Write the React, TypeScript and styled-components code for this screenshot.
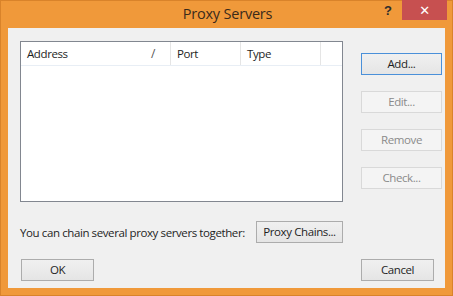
import * as React from "react";
import styled, { createGlobalStyle } from "styled-components";

const GlobalStyle = createGlobalStyle`
  html, body {
    margin: 0;
    padding: 0;
    background: #f0993a;
  }
  body {
    font-family: "Open Sans", "Noto Sans", sans-serif;
    font-size: 11.5px;
    letter-spacing: -0.4px;
  }
`;

const WindowStyled = styled.div`
  width: 453px;
  height: 296px;
  box-sizing: border-box;
  background: #f0993a;
  border: 1px solid #d9832a;
  display: flex;
  flex-direction: column;
`;

const TitleBar = styled.div`
  height: 27px;
  display: flex;
  align-items: flex-start;
  position: relative;
  .title {
    flex: 1;
    text-align: center;
    font-size: 14.5px;
    letter-spacing: -0.2px;
    color: #3a2a1a;
    line-height: 26px;
    padding-left: 2px;
  }
  .help {
    position: absolute;
    right: 60px;
    top: 2px;
    font-weight: bold;
    font-size: 13px;
    letter-spacing: 0;
    color: #2d2d2d;
    font-family: "Liberation Sans", sans-serif;
  }
  .close {
    position: absolute;
    right: 5px;
    top: -1px;
    width: 45px;
    height: 20px;
    background: #c75050;
    color: #fff;
    display: flex;
    align-items: center;
    justify-content: center;
    font-size: 13px;
    font-family: "DejaVu Sans", sans-serif;
  }
`;

const Client = styled.div`
  margin-left: 7px;
  width: 437px;
  height: 260px;
  background: #f0f0f0;
  box-sizing: border-box;
  padding: 13px 0 0 12px;
  color: #1e1e1e;
  white-space: nowrap;
`;

const TopRow = styled.div`
  display: flex;
  align-items: flex-start;
`;

const ListBox = styled.div`
  width: 323px;
  height: 161px;
  box-sizing: border-box;
  border: 1px solid #828790;
  background: #fff;
`;

const Header = styled.div`
  display: flex;
  height: 24px;
  border-bottom: 1px solid #e8eef5;
  box-sizing: border-box;
`;

const Column = styled.div<{ $width: number }>`
  width: ${(p) => p.$width}px;
  box-sizing: border-box;
  border-right: 1px solid #e5e5e5;
  padding: 0 6px;
  display: flex;
  align-items: center;
  justify-content: space-between;
  line-height: 22px;
  .sort {
    color: #555;
    font-size: 12px;
    margin-right: 9px;
  }
`;

const ButtonColumn = styled.div`
  margin-left: 18px;
  padding-top: 12px;
  display: flex;
  flex-direction: column;
  gap: 16px;
`;

const Button = styled.button<{ $width: number; $variant?: "default" | "disabled" }>`
  width: ${(p) => p.$width}px;
  height: 22px;
  box-sizing: border-box;
  font-family: "Open Sans", "Noto Sans", sans-serif;
  font-size: 11.5px;
  letter-spacing: -0.4px;
  white-space: nowrap;
  padding: 0;
  line-height: 18px;
  border: 1px solid
    ${(p) =>
      p.$variant === "default"
        ? "#4a90d9"
        : p.$variant === "disabled"
          ? "#d9d9d9"
          : "#acacac"};
  background: ${(p) =>
    p.$variant === "disabled"
      ? "#f4f4f4"
      : "linear-gradient(#f0f0f0, #e5e5e5)"};
  color: ${(p) => (p.$variant === "disabled" ? "#8a8a8a" : "#1e1e1e")};
`;

const ChainRow = styled.div`
  width: 323px;
  margin-top: 19px;
  display: flex;
  align-items: center;
  justify-content: space-between;
`;

const FooterRow = styled.div`
  width: 413px;
  margin-top: 16px;
  padding-left: 1px;
  display: flex;
  justify-content: space-between;
`;

const App: React.FC = () => {
  return (
    <>
      <GlobalStyle />
      <WindowStyled>
        <TitleBar>
          <div className="title">Proxy Servers</div>
          <div className="help">?</div>
          <div className="close">✕</div>
        </TitleBar>
        <Client>
          <TopRow>
            <ListBox>
              <Header>
                <Column $width={150}>
                  <span>Address</span>
                  <span className="sort">/</span>
                </Column>
                <Column $width={70}>Port</Column>
                <Column $width={80}>Type</Column>
              </Header>
            </ListBox>
            <ButtonColumn>
              <Button $width={81} $variant="default">
                Add...
              </Button>
              <Button $width={81} $variant="disabled">
                Edit...
              </Button>
              <Button $width={81} $variant="disabled">
                Remove
              </Button>
              <Button $width={81} $variant="disabled">
                Check...
              </Button>
            </ButtonColumn>
          </TopRow>
          <ChainRow>
            <span>You can chain several proxy servers together:</span>
            <Button $width={87}>Proxy Chains...</Button>
          </ChainRow>
          <FooterRow>
            <Button $width={73}>OK</Button>
            <Button $width={73}>Cancel</Button>
          </FooterRow>
        </Client>
      </WindowStyled>
    </>
  );
};

export default App;
